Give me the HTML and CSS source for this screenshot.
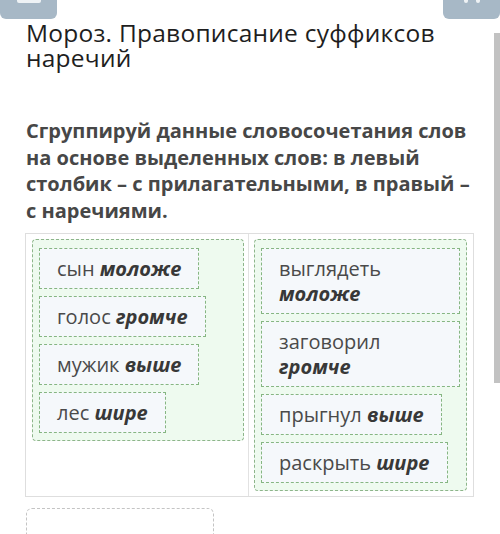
FILE: index.html
```html
<!DOCTYPE html>
<html lang="ru">
<head>
<meta charset="utf-8">
<title>Мороз. Правописание суффиксов наречий</title>
<link rel="stylesheet" href="styles.css">
</head>
<body>
<div class="topbar">
  <div class="btn btn-left"><span class="btn-line"></span></div>
  <div class="btn btn-right"><span class="dot"></span><span class="dot"></span></div>
</div>
<div class="page">
  <main class="content">
    <h1 class="title">Мороз. Правописание суффиксов наречий</h1>
    <p class="task">Сгруппируй данные словосочетания слов на основе выделенных слов: в левый столбик – с прилагательными, в правый – с наречиями.</p>
    <div class="board">
      <div class="col col-left">
        <div class="zone">
          <div class="item">сын <b>моложе</b></div>
          <div class="item">голос <b>громче</b></div>
          <div class="item">мужик <b>выше</b></div>
          <div class="item">лес <b>шире</b></div>
        </div>
      </div>
      <div class="col col-right">
        <div class="zone">
          <div class="item">выглядеть <b>моложе</b></div>
          <div class="item">заговорил <b>громче</b></div>
          <div class="item">прыгнул <b>выше</b></div>
          <div class="item">раскрыть <b>шире</b></div>
        </div>
      </div>
    </div>
    <div class="bank"></div>
  </main>
  <div class="scrollbar"></div>
</div>
</body>
</html>
```
FILE: styles.css
```css
* { box-sizing: border-box; }
html, body { margin: 0; padding: 0; background: #fff; }
body {
  font-family: "Open Sans", "Noto Sans", sans-serif;
  color: #222;
  overflow: hidden;
  height: 534px;
}
.topbar {
  display: flex;
  justify-content: space-between;
  height: 19px;
}
.btn {
  width: 57px;
  height: 19px;
  background: #a7b8c6;
  border-radius: 0 0 6px 6px;
  display: flex;
  justify-content: center;
  gap: 8px;
}
.btn-line {
  width: 24px;
  height: 3px;
  background: #eef2f5;
  border-radius: 0 0 2px 2px;
}
.dot {
  width: 4px;
  height: 3px;
  background: #eef2f5;
  border-radius: 0 0 2px 2px;
}
.page {
  display: flex;
}
.content {
  flex: 1;
  padding: 0 20px 0 26px;
}
.scrollbar {
  width: 6px;
  height: 350px;
  margin-top: 14px;
  background: #c2c2c2;
}
.title {
  margin: 1px 0 0 0;
  font-size: 24.5px;
  line-height: 25px;
  font-weight: 400;
  color: #1e1e1e;
  letter-spacing: 0.25px;
}
.task {
  margin: 48px 0 0 0;
  font-size: 20px;
  line-height: 26.5px;
  font-weight: 700;
  color: #474747;
}
.board {
  margin: 9px 0 0 -1px;
  width: 449px;
  border: 1px solid #dedede;
  display: grid;
  grid-template-columns: 222px 1fr;
}
.col {
  padding: 5px 6px 5px 6px;
  align-self: start;
}
.col-left { padding-right: 4px; }
.col-right {
  border-left: 1px solid #e2e2e2;
  align-self: stretch;
  padding-left: 5px;
}
.zone {
  background: #eefaef;
  border: 1px dashed #8db58a;
  border-radius: 4px;
  padding: 8px 6px 7px 6px;
  display: flex;
  flex-direction: column;
  align-items: flex-start;
  gap: 7px;
}
.item {
  background: #f5f8fb;
  border: 1px dashed #86b682;
  padding: 7px 17px;
  font-size: 20px;
  line-height: 25px;
  color: #4a4a4a;
  max-width: 100%;
}
.item b {
  font-weight: 700;
  font-style: italic;
  color: #383838;
}
.bank {
  margin-top: 11px;
  width: 188px;
  height: 40px;
  border: 1px dashed #c4c4c4;
  border-radius: 6px;
}
```
